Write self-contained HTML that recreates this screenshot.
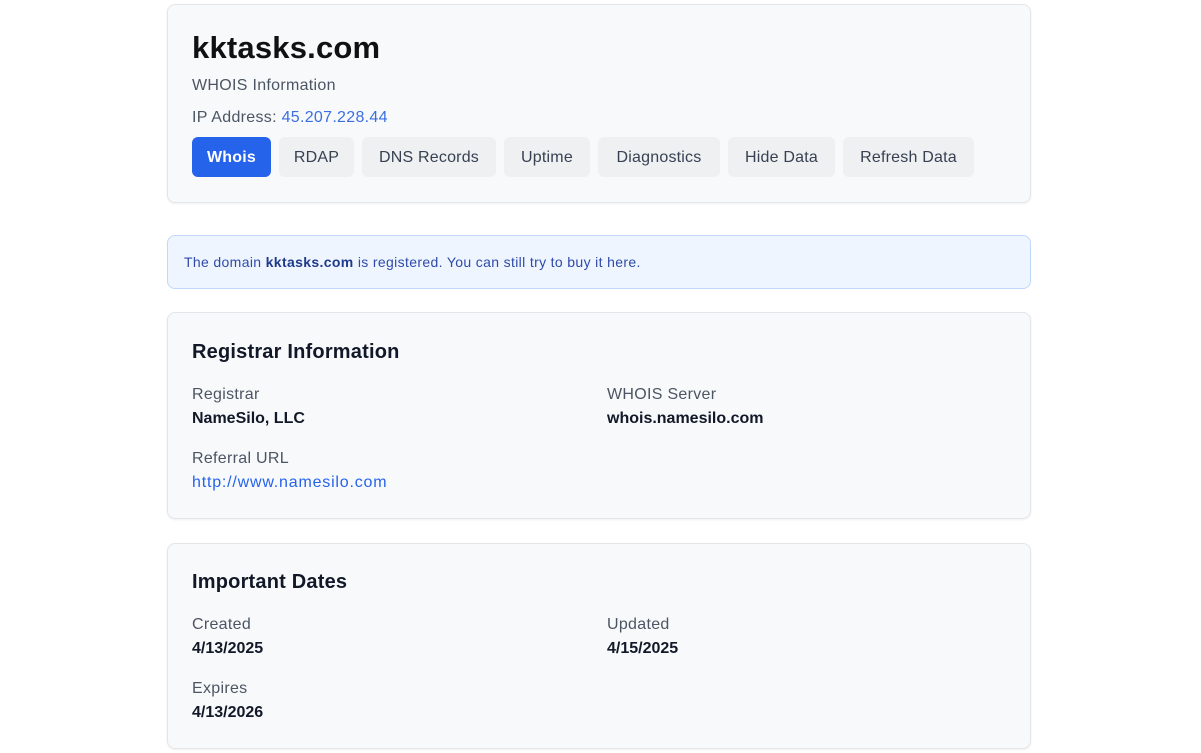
<!DOCTYPE html>
<html><head><style>
body{margin:0;background:#fff;font-family:"Liberation Sans",sans-serif;color:#1f2937;width:1201px;height:753px;overflow:hidden;position:relative}
.card{position:absolute;left:167px;width:862px;background:#f8f9fb;border:1px solid #e3e5e8;border-radius:8px;box-shadow:0 1px 2px rgba(0,0,0,.06)}
.abs{position:absolute;white-space:nowrap}
.btn{position:absolute;top:137px;height:40px;line-height:42px;text-align:center;border-radius:6px;background:#eef0f2;color:#374151;font-size:16px;letter-spacing:0.2px}
.lbl{font-size:16px;color:#4b5563;letter-spacing:0.3px}
.val{font-size:16px;font-weight:bold;color:#111827}
h2{margin:0;font-size:20px;font-weight:bold;color:#111827;letter-spacing:0.2px}
</style></head><body>
<div class="card" style="top:4px;height:197px"></div>
<div class="abs" style="left:192px;top:30px;font-size:31px;font-weight:bold;color:#111;letter-spacing:0.2px">kktasks.com</div>
<div class="abs lbl" style="left:192px;top:77px">WHOIS Information</div>
<div class="abs lbl" style="left:192px;top:109px">IP Address: <span style="color:#3b6fe0">45.207.228.44</span></div>
<div class="btn" style="left:192px;width:79px;background:#2563eb;color:#fff;font-weight:bold">Whois</div>
<div class="btn" style="left:279px;width:75px">RDAP</div>
<div class="btn" style="left:362px;width:134px">DNS Records</div>
<div class="btn" style="left:504px;width:86px">Uptime</div>
<div class="btn" style="left:598px;width:122px">Diagnostics</div>
<div class="btn" style="left:728px;width:107px">Hide Data</div>
<div class="btn" style="left:843px;width:131px">Refresh Data</div>

<div class="card" style="top:235px;height:52px;background:#eef5ff;border-color:#bfd8fb;box-shadow:none"></div>
<div class="abs" style="left:184px;top:254px;font-size:14px;color:#2f4aa8;letter-spacing:0.35px">The domain <b style="color:#1e3a8a;font-weight:bold">kktasks.com</b> is registered. You can still try to buy it here.</div>

<div class="card" style="top:312px;height:205px"></div>
<div class="abs" style="left:192px;top:341px"><h2>Registrar Information</h2></div>
<div class="abs lbl" style="left:192px;top:386px">Registrar</div>
<div class="abs val" style="left:192px;top:410px">NameSilo, LLC</div>
<div class="abs lbl" style="left:607px;top:386px">WHOIS Server</div>
<div class="abs val" style="left:607px;top:410px">whois.namesilo.com</div>
<div class="abs lbl" style="left:192px;top:450px">Referral URL</div>
<div class="abs" style="left:192px;top:474px;font-size:16px;color:#2563eb;letter-spacing:0.8px">http://www.namesilo.com</div>

<div class="card" style="top:543px;height:204px"></div>
<div class="abs" style="left:192px;top:571px"><h2>Important Dates</h2></div>
<div class="abs lbl" style="left:192px;top:616px">Created</div>
<div class="abs val" style="left:192px;top:640px">4/13/2025</div>
<div class="abs lbl" style="left:607px;top:616px">Updated</div>
<div class="abs val" style="left:607px;top:640px">4/15/2025</div>
<div class="abs lbl" style="left:192px;top:680px">Expires</div>
<div class="abs val" style="left:192px;top:704px">4/13/2026</div>
</body></html>
